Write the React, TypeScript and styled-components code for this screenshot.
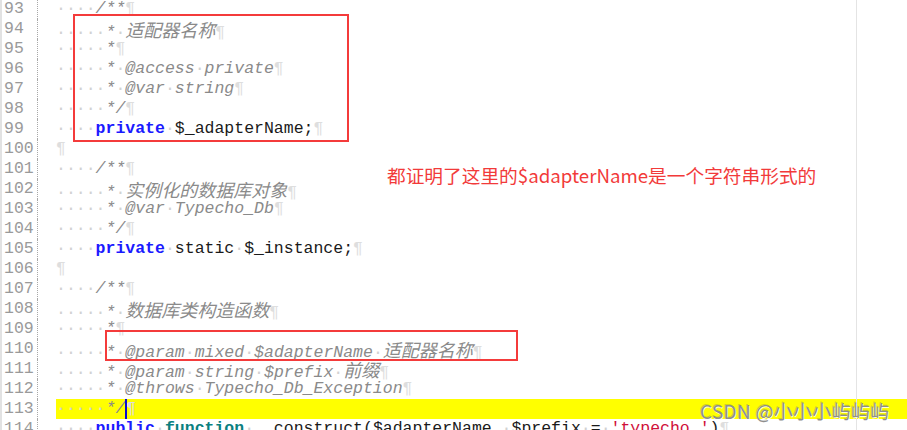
import React from "react";
import styled, { createGlobalStyle } from "styled-components";

const Global = createGlobalStyle`
  html, body { margin: 0; padding: 0; background: #fff; overflow: hidden; }
  #root { width: 907px; height: 430px; }
`;

const MONO = `"Liberation Mono", "Courier New", "Noto Sans CJK SC", monospace`;

const Page = styled.div`
  position: relative;
  width: 907px;
  height: 430px;
  overflow: hidden;
  background: #fff;
`;

const Editor = styled.div`
  display: flex;
  flex-direction: column;
  margin-top: -1px;
  font-family: ${MONO};
  font-size: 16.5px;
`;

const Row = styled.div`
  display: flex;
  height: 20px;
  line-height: 20px;
`;

const Gutter = styled.div`
  flex: 0 0 auto;
  width: 33px;
  padding-left: 2px;
  border-left: 2px solid #e2e2e2;
  border-right: 1px dotted #a8a8a8;
  color: #9a9a9a;
  white-space: pre;
`;

const Fold = styled.div`
  flex: 0 0 18px;
`;

const Code = styled.div<{ $hl?: boolean }>`
  flex: 1 1 auto;
  white-space: pre;
  background: ${(p) => (p.$hl ? "#ffff00" : "transparent")};
  color: #1a1a1a;
`;

const Ws = styled.span`
  color: #d2d2d2;
`;
const Pil = styled.span`
  color: #dedede;
  font-style: normal;
`;
const Kw = styled.span`
  color: #1a1aff;
  font-weight: bold;
`;
const Fn = styled.span`
  color: #0a8080;
  font-weight: bold;
`;
const Cm = styled.span`
  color: #8a8a8a;
  font-style: italic;
`;
const Cjk = styled.span`
  font-family: "Noto Sans CJK SC", sans-serif;
  font-size: 18px;
  font-style: italic;
  color: #8a8a8a;
`;
const Str = styled.span`
  color: #d0103a;
`;
const Caret = styled.span`
  display: inline-block;
  width: 2px;
  height: 20px;
  margin-right: -1px;
  vertical-align: top;
  background: #0a0ad0;
`;

const EdgeLine = styled.div`
  position: absolute;
  left: 856px;
  top: 0;
  bottom: 0;
  width: 1px;
  background: #e4e4e4;
`;

const RedBox = styled.div<{ $l: number; $t: number; $w: number; $h: number }>`
  position: absolute;
  left: ${(p) => p.$l}px;
  top: ${(p) => p.$t}px;
  width: ${(p) => p.$w}px;
  height: ${(p) => p.$h}px;
  box-sizing: border-box;
  border: 2px solid #f43b3b;
`;

const Note = styled.div`
  position: absolute;
  left: 387px;
  top: 163px;
  font-family: "Noto Sans CJK SC", "Microsoft YaHei", sans-serif;
  font-size: 18.7px;
  line-height: 24px;
  color: #f23a3a;
  white-space: nowrap;
`;

const Watermark = styled.div`
  position: absolute;
  left: 700px;
  top: 399px;
  font-family: "Noto Sans CJK SC", "Microsoft YaHei", sans-serif;
  font-size: 19px;
  line-height: 24px;
  letter-spacing: 0.3px;
  color: #8e8e8e;
  text-shadow: 1px 1px 0 rgba(255, 255, 255, 0.85), -1px -1px 0 rgba(90, 90, 90, 0.25);
  white-space: nowrap;
`;

type Tok =
  | ["w", number]
  | ["p"]
  | ["k", string]
  | ["f", string]
  | ["c", string]
  | ["j", string]
  | ["s", string]
  | ["t", string]
  | ["caret"];

const dots = (n: number) => "\u00b7".repeat(n);

const lines: { n: number; toks: Tok[]; hl?: boolean }[] = [
  { n: 93, toks: [["w", 4], ["c", "/**"], ["p"]] },
  { n: 94, toks: [["w", 5], ["c", "*"], ["w", 1], ["j", "适配器名称"], ["p"]] },
  { n: 95, toks: [["w", 5], ["c", "*"], ["p"]] },
  { n: 96, toks: [["w", 5], ["c", "*"], ["w", 1], ["c", "@access"], ["w", 1], ["c", "private"], ["p"]] },
  { n: 97, toks: [["w", 5], ["c", "*"], ["w", 1], ["c", "@var"], ["w", 1], ["c", "string"], ["p"]] },
  { n: 98, toks: [["w", 5], ["c", "*/"], ["p"]] },
  { n: 99, toks: [["w", 4], ["k", "private"], ["w", 1], ["t", "$_adapterName;"], ["p"]] },
  { n: 100, toks: [["p"]] },
  { n: 101, toks: [["w", 4], ["c", "/**"], ["p"]] },
  { n: 102, toks: [["w", 5], ["c", "*"], ["w", 1], ["j", "实例化的数据库对象"], ["p"]] },
  { n: 103, toks: [["w", 5], ["c", "*"], ["w", 1], ["c", "@var"], ["w", 1], ["c", "Typecho_Db"], ["p"]] },
  { n: 104, toks: [["w", 5], ["c", "*/"], ["p"]] },
  { n: 105, toks: [["w", 4], ["k", "private"], ["w", 1], ["t", "static"], ["w", 1], ["t", "$_instance;"], ["p"]] },
  { n: 106, toks: [["p"]] },
  { n: 107, toks: [["w", 4], ["c", "/**"], ["p"]] },
  { n: 108, toks: [["w", 5], ["c", "*"], ["w", 1], ["j", "数据库类构造函数"], ["p"]] },
  { n: 109, toks: [["w", 5], ["c", "*"], ["p"]] },
  {
    n: 110,
    toks: [["w", 5], ["c", "*"], ["w", 1], ["c", "@param"], ["w", 1], ["c", "mixed"], ["w", 1], ["c", "$adapterName"], ["w", 1], ["j", "适配器名称"], ["p"]],
  },
  {
    n: 111,
    toks: [["w", 5], ["c", "*"], ["w", 1], ["c", "@param"], ["w", 1], ["c", "string"], ["w", 1], ["c", "$prefix"], ["w", 1], ["j", "前缀"], ["p"]],
  },
  {
    n: 112,
    toks: [["w", 5], ["c", "*"], ["w", 1], ["c", "@throws"], ["w", 1], ["c", "Typecho_Db_Exception"], ["p"]],
  },
  { n: 113, hl: true, toks: [["w", 5], ["c", "*/"], ["caret"], ["p"]] },
  {
    n: 114,
    toks: [
      ["w", 4], ["k", "public"], ["w", 1], ["f", "function"], ["w", 1], ["t", "__construct($adapterName,"], ["w", 1],
      ["t", "$prefix"], ["w", 1], ["t", "="], ["w", 1], ["s", "'typecho_'"], ["t", ")"], ["p"],
    ],
  },
];

function renderTok(tok: Tok, i: number) {
  switch (tok[0]) {
    case "w":
      return <Ws key={i}>{dots(tok[1])}</Ws>;
    case "p":
      return <Pil key={i}>¶</Pil>;
    case "k":
      return <Kw key={i}>{tok[1]}</Kw>;
    case "f":
      return <Fn key={i}>{tok[1]}</Fn>;
    case "c":
      return <Cm key={i}>{tok[1]}</Cm>;
    case "j":
      return <Cjk key={i}>{tok[1]}</Cjk>;
    case "s":
      return <Str key={i}>{tok[1]}</Str>;
    case "t":
      return <span key={i}>{tok[1]}</span>;
    case "caret":
      return <Caret key={i} />;
  }
}

export default function App() {
  return (
    <Page>
      <Global />
      <Editor>
        {lines.map((l) => (
          <Row key={l.n}>
            <Gutter>{l.n}</Gutter>
            <Fold />
            <Code $hl={l.hl}>{l.toks.map(renderTok)}</Code>
          </Row>
        ))}
      </Editor>
      <EdgeLine />
      <RedBox $l={73} $t={14} $w={276} $h={128} />
      <RedBox $l={105} $t={330} $w={413} $h={31} />
      <Note>都证明了这里的$adapterName是一个字符串形式的</Note>
      <Watermark>CSDN @小小小屿屿屿</Watermark>
    </Page>
  );
}
